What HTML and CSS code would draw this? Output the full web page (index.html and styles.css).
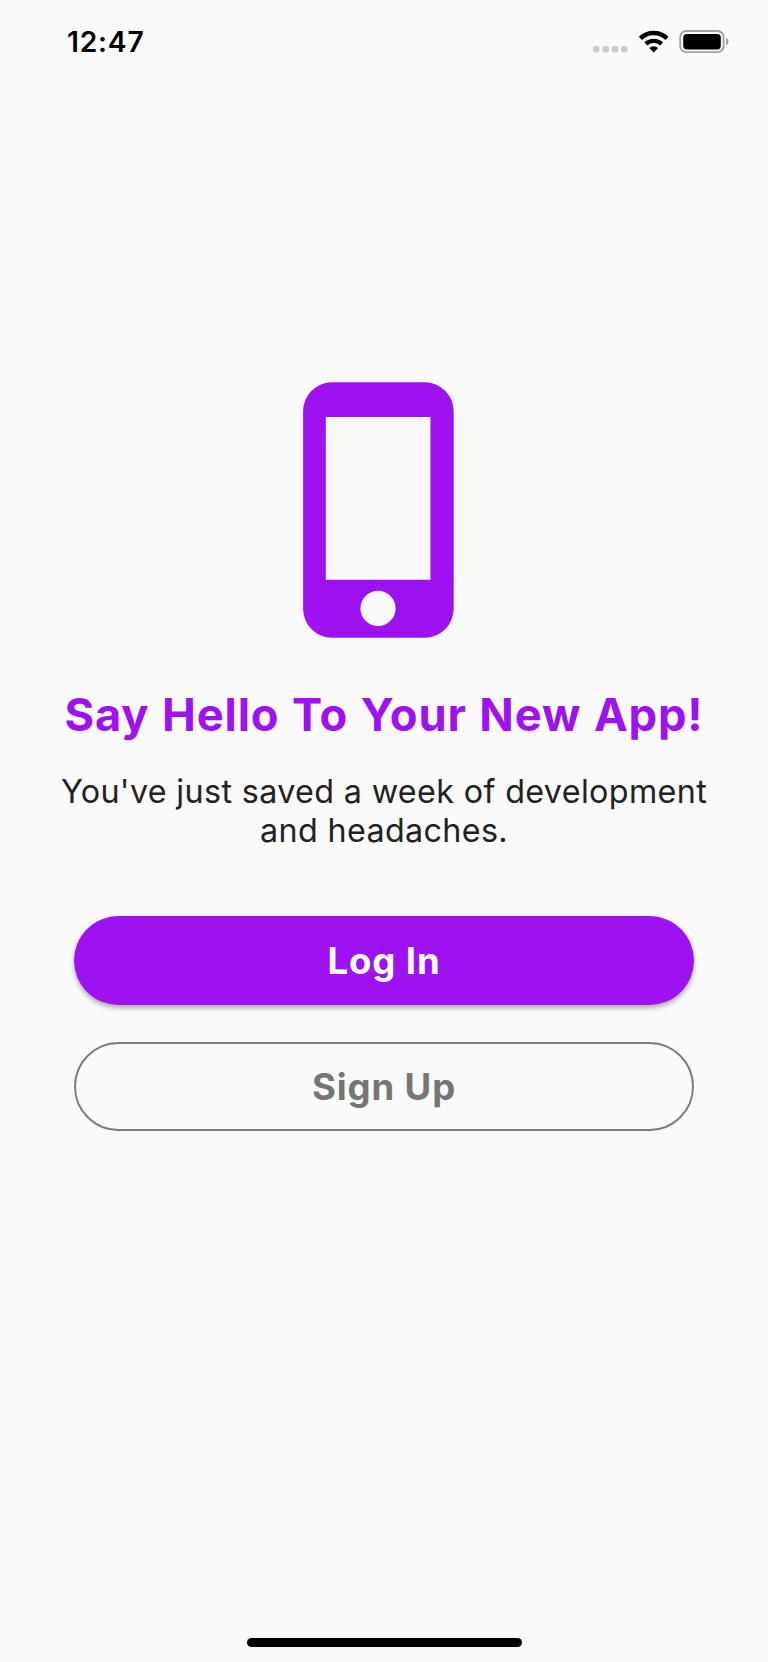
FILE: index.html
```html
<!DOCTYPE html>
<html lang="en">
<head>
<meta charset="utf-8">
<title>Welcome</title>
<link rel="stylesheet" href="styles.css">
</head>
<body>
<div class="screen">
  <header class="status">
    <span class="clock">12:47</span>
    <svg class="indicators" width="138" height="26" viewBox="0 0 138 26" aria-hidden="true">
      <g fill="#cbcbcb">
        <rect x="0" y="16" width="6.5" height="6.5" rx="2"/>
        <rect x="9.5" y="16" width="6.5" height="6.5" rx="2"/>
        <rect x="18.7" y="16" width="6.5" height="6.5" rx="2"/>
        <rect x="28" y="16" width="6.5" height="6.5" rx="2"/>
      </g>
      <g fill="none" stroke="#000" stroke-width="4.4">
        <path d="M47.4 8.3 A19.4 19.4 0 0 1 74 8.3"/>
        <path d="M52.8 13.9 A11.7 11.7 0 0 1 68.6 13.9"/>
      </g>
      <path d="M56.3 18 A6.4 6.4 0 0 1 65.1 18 L60.7 22.6 Z"/>
      <rect x="87.2" y="1" width="43.4" height="21.2" rx="6" fill="none" stroke="#a2a2a2" stroke-width="1.8"/>
      <rect x="90.2" y="4" width="37.6" height="15.4" rx="3.6"/>
      <path d="M133 8 Q135.6 9 135.6 11.6 Q135.6 14.2 133 15.3 Z" fill="#a2a2a2"/>
    </svg>
  </header>
  <main class="content">
    <svg class="phone" width="151" height="256" viewBox="0 0 151 256" aria-hidden="true">
      <path fill="#9e11f1" fill-rule="evenodd" d="M29 .2H121.7A29 29 0 0 1 150.7 29.2V226.7A29 29 0 0 1 121.7 255.7H29A29 29 0 0 1 .1 226.7V29.2A29 29 0 0 1 29 .2ZM22.8 35V197.8H127.4V35ZM75 208.8A17.6 17.6 0 1 0 75 244A17.6 17.6 0 1 0 75 208.8Z"/>
    </svg>
    <h1 class="title">Say Hello To Your New App!</h1>
    <p class="lead">You've just saved a week of development<br>and headaches.</p>
    <div class="actions">
      <button class="button primary">Log In</button>
      <button class="button outline">Sign Up</button>
    </div>
  </main>
  <div class="home-bar"></div>
</div>
</body>
</html>
```
FILE: styles.css
```css
* { box-sizing: border-box; }
body {
  margin: 0;
  background: #fafafa;
  font-family: Inter, "Liberation Sans", sans-serif;
}
.screen {
  height: 1662px;
  display: flex;
  flex-direction: column;
  align-items: center;
  overflow: hidden;
}
.status {
  width: 100%;
  height: 82px;
  padding: 26px 37.5px 0 67px;
  display: flex;
  justify-content: space-between;
  align-items: flex-start;
}
.indicators { margin-top: 4px; }
.clock {
  font-size: 28.2px;
  line-height: 32px;
  font-weight: 600;
  letter-spacing: 0.8px;
  color: #000;
}
.content {
  flex: 1;
  width: 100%;
  padding-top: 300px;
  display: flex;
  flex-direction: column;
  align-items: center;
}
.phone { margin-right: 11px; }
.title {
  margin: 49px 0 0;
  font-size: 45.3px;
  line-height: 56px;
  font-weight: 700;
  letter-spacing: 0.85px;
  word-spacing: 1px;
  color: #9e11f1;
  white-space: nowrap;
}
.lead {
  margin: 29px 0 0;
  font-size: 32.3px;
  line-height: 39px;
  letter-spacing: 0.35px;
  color: #222;
  text-align: center;
  white-space: nowrap;
}
.actions {
  width: 620px;
  margin-top: 66px;
  display: grid;
  gap: 37px;
}
.button {
  height: 89px;
  border: 0;
  border-radius: 45px;
  padding: 0;
  font: 700 36.5px/44px Inter, "Liberation Sans", sans-serif;
  letter-spacing: 0.9px;
}
.primary {
  background: #9e11f1;
  color: #fff;
  box-shadow: 0 3px 5px rgba(0, 0, 0, 0.32);
}
.outline {
  background: transparent;
  border: 2px solid #7d7d7d;
  padding-top: 1px;
  color: #757575;
}
.home-bar {
  width: 275px;
  height: 9.5px;
  margin-bottom: 14.8px;
  border-radius: 5px;
  background: #000;
}
```
